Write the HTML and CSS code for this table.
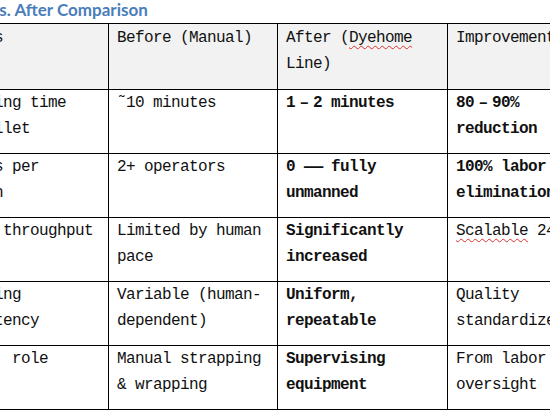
FILE: index.html
```html
<!DOCTYPE html>
<html lang="en">
<head>
    <meta charset="UTF-8">
    <meta name="viewport" content="width=device-width, initial-scale=1.0">
    <title>Before vs. After Comparison</title>
    <link rel="stylesheet" href="styles.css">
</head>
<body>
    <div class="doc">
        <h3 class="title">Before vs. After Comparison</h3>
        <table class="compare">
            <colgroup>
                <col class="c-metric">
                <col class="c-before">
                <col class="c-after">
                <col class="c-gain">
            </colgroup>
            <thead>
                <tr>
                    <th>Metrics</th>
                    <th>Before (Manual)</th>
                    <th>After (<span class="typo">Dyehome</span> Line)</th>
                    <th>Improvement</th>
                </tr>
            </thead>
            <tbody>
                <tr>
                    <td>Packaging time per pallet</td>
                    <td>&#732;10 minutes</td>
                    <td class="strong">1<span class="wide">&ndash;</span>2 minutes</td>
                    <td class="strong">80<span class="wide">&ndash;</span>90% reduction</td>
                </tr>
                <tr>
                    <td>Workers per station</td>
                    <td>2+ operators</td>
                    <td class="strong">0 <span class="wide long">&mdash;</span> fully unmanned</td>
                    <td class="strong">100% labor elimination</td>
                </tr>
                <tr>
                    <td>Output throughput</td>
                    <td>Limited by human pace</td>
                    <td class="strong">Significantly increased</td>
                    <td><span class="typo">Scalable</span> 24/7</td>
                </tr>
                <tr>
                    <td>Strapping consistency</td>
                    <td>Variable (human-dependent)</td>
                    <td class="strong">Uniform, repeatable</td>
                    <td>Quality standardized</td>
                </tr>
                <tr>
                    <td>Humans' role</td>
                    <td>Manual strapping &amp; wrapping</td>
                    <td class="strong">Supervising equipment</td>
                    <td>From labor to oversight</td>
                </tr>
            </tbody>
        </table>
    </div>
</body>
</html>
```

FILE: styles.css
```css
body {
    margin: 0;
    padding: 0;
    background-color: #fff;
    color: #111;
    font-family: "Liberation Mono", "DejaVu Sans Mono", monospace;
    overflow: hidden;
}
.doc {
    margin-left: -69px;
    width: 720px;
}
.title {
    margin: 0;
    height: 23px;
    font-family: Lato, "Open Sans", sans-serif;
    font-size: 17px;
    font-weight: bold;
    line-height: 20px;
    color: #4a7ebb;
    text-indent: 5px;
}
.compare {
    border-collapse: collapse;
    table-layout: fixed;
    width: 676px;
}
.c-metric { width: 177px; }
.c-before { width: 169px; }
.c-after { width: 170px; }
.c-gain { width: 160px; }
.compare th, .compare td {
    border: 1px solid #000;
    padding: 0 8px 11px;
    font-size: 16px;
    letter-spacing: -0.6px;
    line-height: 26px;
    font-weight: normal;
    text-align: left;
    vertical-align: top;
}
.compare th {
    background-color: #f2f2f2;
    padding-top: 1px;
    padding-bottom: 12px;
}
.compare .strong {
    font-weight: bold;
}
.wide {
    display: inline-block;
    width: 18px;
    text-align: center;
}
.long {
    transform: scaleX(2);
}
.typo {
    text-decoration: underline wavy #e03030;
    text-decoration-thickness: 1px;
    text-underline-offset: 3px;
}
```
